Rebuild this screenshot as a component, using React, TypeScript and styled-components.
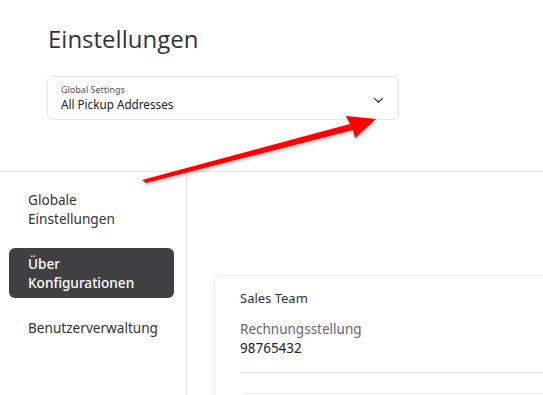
import React from "react"
import styled, { createGlobalStyle } from "styled-components"
import { ChevronDown } from "lucide-react"

const GlobalStyle = createGlobalStyle`
    html, body {
        margin: 0;
        padding: 0;
        background: #ffffff;
    }
    body {
        font-family: "Noto Sans", "Open Sans", sans-serif;
        color: #333333;
    }
`

const Page = styled.div`
    position: relative;
    width: 543px;
    height: 395px;
    overflow: hidden;
    display: flex;
    flex-direction: column;
`

const Header = styled.div`
    height: 172px;
    flex-shrink: 0;
    box-sizing: border-box;
    padding: 22px 0 0 47px;
    border-bottom: 1px solid #e4e4e4;
`

const Title = styled.h1`
    margin: 0 0 0 1px;
    font-family: "Open Sans", "Noto Sans", sans-serif;
    font-size: 24px;
    font-weight: 400;
    line-height: 34px;
    color: #333336;
`

const Select = styled.div`
    margin-top: 20px;
    width: 352px;
    height: 44px;
    box-sizing: border-box;
    border: 1px solid #e6e6e6;
    border-radius: 6px;
    padding: 5px 12px 0 13px;
    display: flex;
    align-items: center;
`

const SelectText = styled.div`
    flex-grow: 1;
    display: flex;
    flex-direction: column;
    margin-top: -5px;
`

const SelectLabel = styled.div`
    font-size: 9px;
    line-height: 12px;
    color: #555558;
`

const SelectValue = styled.div`
    font-size: 11.7px;
    line-height: 16px;
    color: #222225;
`

const Body = styled.div`
    flex-grow: 1;
    min-height: 0;
    display: flex;
`

const Sidebar = styled.div`
    width: 187px;
    flex-shrink: 0;
    box-sizing: border-box;
    border-right: 1px solid #e4e4e4;
    padding: 12px 12px 0 9px;
    display: flex;
    flex-direction: column;
    gap: 14px;
`

const NavItem = styled.div<{ $active?: boolean }>`
    padding: 6px 19px;
    border-radius: 6px;
    font-size: 13.6px;
    line-height: 19px;
    font-weight: ${({ $active }) => ($active ? 500 : 400)};
    background: ${({ $active }) => ($active ? "#404043" : "transparent")};
    color: ${({ $active }) => ($active ? "#ffffff" : "#333336")};
`

const Main = styled.div`
    flex-grow: 1;
    padding: 103px 0 0 27px;
`

const Card = styled.div`
    border: 1px solid #ececec;
    border-right: none;
    border-radius: 8px 0 0 0;
    padding: 13px 0 0 25px;
    height: 200px;
`

const CardTitle = styled.div`
    font-size: 13px;
    line-height: 18px;
    color: #333336;
`

const Field = styled.div`
    margin-top: 13px;
    padding-bottom: 14px;
    border-bottom: 1px solid #e4e4e4;
`

const FieldLabel = styled.div`
    font-size: 13.5px;
    line-height: 19px;
    color: #666669;
`

const FieldValue = styled.div`
    font-size: 13.5px;
    line-height: 19px;
    color: #222225;
`

const SubBox = styled.div`
    margin-top: 20px;
    height: 40px;
    border: 1px solid #ececec;
    border-right: none;
    border-radius: 6px 0 0 0;
`

const Arrow = styled.svg`
    position: absolute;
    left: 0;
    top: 0;
    pointer-events: none;
`

const App: React.FC = () => {
    return (
        <>
            <GlobalStyle />
            <Page>
                <Header>
                    <Title>Einstellungen</Title>
                    <Select>
                        <SelectText>
                            <SelectLabel>Global Settings</SelectLabel>
                            <SelectValue>All Pickup Addresses</SelectValue>
                        </SelectText>
                        <ChevronDown size={15} color="#333336" strokeWidth={2} />
                    </Select>
                </Header>
                <Body>
                    <Sidebar>
                        <NavItem>
                            Globale
                            <br />
                            Einstellungen
                        </NavItem>
                        <NavItem $active>
                            Über
                            <br />
                            Konfigurationen
                        </NavItem>
                        <NavItem>Benutzerverwaltung</NavItem>
                    </Sidebar>
                    <Main>
                        <Card>
                            <CardTitle>Sales Team</CardTitle>
                            <Field>
                                <FieldLabel>Rechnungsstellung</FieldLabel>
                                <FieldValue>98765432</FieldValue>
                            </Field>
                            <SubBox />
                        </Card>
                    </Main>
                </Body>
                <Arrow width="543" height="395" viewBox="0 0 543 395">
                    <defs>
                        <filter id="shadow" x="-10%" y="-10%" width="120%" height="130%">
                            <feDropShadow dx="1" dy="2" stdDeviation="1.5" floodColor="#000" floodOpacity="0.25" />
                        </filter>
                    </defs>
                    <polygon
                        points="142,180 350,124 346,116 376,119 355,138 353,130 146,183"
                        fill="#ff0000"
                        filter="url(#shadow)"
                    />
                </Arrow>
            </Page>
        </>
    )
}

export default App
